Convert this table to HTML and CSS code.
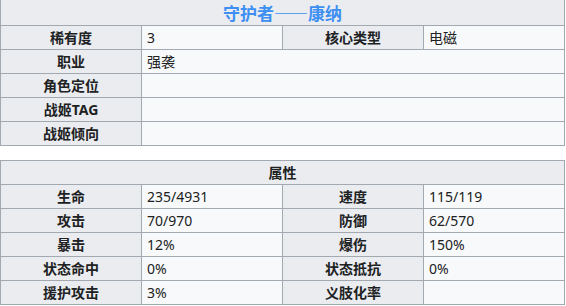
FILE: index.html
```html
<!DOCTYPE html>
<html lang="zh">
<head>
<meta charset="utf-8">
<link rel="stylesheet" href="styles.css">
</head>
<body>
<table class="info">
  <colgroup><col class="c"><col class="c"><col class="c"><col class="c"></colgroup>
  <tr><th class="title" colspan="4">守护者——康纳</th></tr>
  <tr><th>稀有度</th><td>3</td><th>核心类型</th><td>电磁</td></tr>
  <tr><th>职业</th><td colspan="3">强袭</td></tr>
  <tr><th>角色定位</th><td colspan="3"></td></tr>
  <tr><th>战姬TAG</th><td colspan="3"></td></tr>
  <tr><th>战姬倾向</th><td colspan="3"></td></tr>
</table>
<table class="info stats">
  <colgroup><col class="c"><col class="c"><col class="c"><col class="c"></colgroup>
  <tr><th class="head" colspan="4">属性</th></tr>
  <tr><th>生命</th><td>235/4931</td><th>速度</th><td>115/119</td></tr>
  <tr><th>攻击</th><td>70/970</td><th>防御</th><td>62/570</td></tr>
  <tr><th>暴击</th><td>12%</td><th>爆伤</th><td>150%</td></tr>
  <tr><th>状态命中</th><td>0%</td><th>状态抵抗</th><td>0%</td></tr>
  <tr><th>援护攻击</th><td>3%</td><th>义肢化率</th><td></td></tr>
</table>
</body>
</html>
```
FILE: styles.css
```css
html, body {
  margin: 0;
  padding: 0;
  background: #ffffff;
}
body {
  font-family: "Noto Sans", "Noto Sans CJK SC", sans-serif;
  font-size: 14px;
  color: #202122;
}
.info {
  width: 565px;
  table-layout: fixed;
  border-collapse: collapse;
  border: 1px solid #a2a9b1;
}
.info .c {
  width: 25%;
}
.info th,
.info td {
  border: 1px solid #a2a9b1;
  padding: 0 5px;
  line-height: 23px;
  height: 23px;
  white-space: nowrap;
  overflow: hidden;
}
.info th {
  background: #eaecf0;
  font-weight: bold;
  text-align: center;
}
.info td {
  background: #f8f9fa;
  text-align: left;
}
.info th.title {
  border-top: 0;
  font-family: "Noto Sans CJK SC", sans-serif;
  font-size: 17px;
  line-height: 25px;
  height: 25px;
  color: #3d8ff2;
}
.info:first-child {
  border-top: 0;
}
.stats {
  margin-top: 14px;
}
.info th.head {
  font-weight: bold;
}
```
